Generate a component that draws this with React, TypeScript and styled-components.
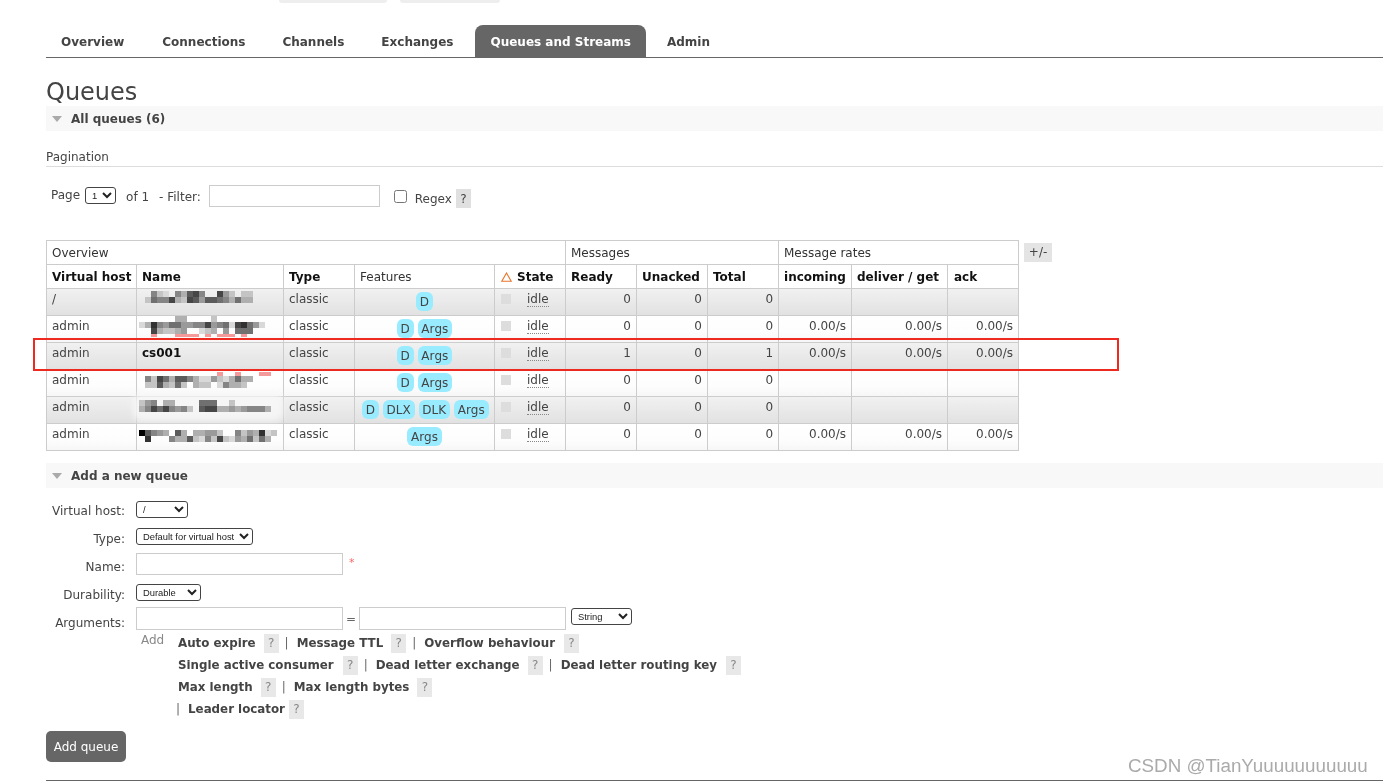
import React from 'react';
import styled, { createGlobalStyle } from 'styled-components';

const GlobalStyle = createGlobalStyle`
  html, body {
    margin: 0;
    padding: 0;
    background: #fff;
    overflow: hidden;
  }
  body {
    font-family: "DejaVu Sans", Verdana, sans-serif;
    font-size: 12px;
    color: #444;
  }
`;

const Page = styled.div`
  position: relative;
  width: 1383px;
  height: 783px;
  overflow: hidden;
  box-sizing: border-box;
  padding-left: 46px;
  transform: translateZ(0);
`;

const TopStubs = styled.div`
  display: flex;
  gap: 13px;
  height: 3px;
  margin-left: 233px;
`;

const TopStub = styled.div<{ $w: number }>`
  width: ${p => p.$w}px;
  background: #eee;
  border-radius: 0 0 4px 4px;
`;

const Tabs = styled.ul`
  display: flex;
  list-style: none;
  margin: 22px 0 0;
  padding: 0;
  height: 32px;
  border-bottom: 1px solid #666;
`;

const Tab = styled.li<{ $active?: boolean; $mr?: number }>`
  display: flex;
  align-items: center;
  padding: 2px 15px 0;
  margin-right: ${p => p.$mr ?? 7}px;
  font-weight: bold;
  font-size: 12px;
  border-radius: 8px 8px 0 0;
  color: ${p => (p.$active ? '#fff' : '#444')};
  background: ${p => (p.$active ? '#666' : 'transparent')};
`;

const Title = styled.h1`
  margin: 20px 0 0;
  height: 28px;
  font-size: 24px;
  line-height: 28px;
  font-weight: normal;
  color: #444;
`;

const SectionBar = styled.div<{ $mt?: number }>`
  display: flex;
  align-items: center;
  height: 25px;
  margin-top: ${p => p.$mt ?? 0}px;
  padding-left: 6px;
  background: #f8f8f8;
  font-weight: bold;
  font-size: 12px;
  color: #444;
`;

const Caret = styled.span`
  width: 0;
  height: 0;
  margin-right: 9px;
  border-left: 5px solid transparent;
  border-right: 5px solid transparent;
  border-top: 6px solid #aaa;
`;

const PaginationLabel = styled.div`
  margin-top: 19px;
  height: 16px;
  line-height: 14px;
  font-size: 12px;
  color: #444;
  border-bottom: 1px solid #ddd;
`;

const PagerRow = styled.div`
  display: flex;
  align-items: flex-start;
  height: 55px;
  margin-top: 18px;
  padding-left: 5px;
  font-size: 12px;
`;

const PagerText = styled.span<{ $ml?: number; $mt?: number }>`
  margin-left: ${p => p.$ml ?? 0}px;
  margin-top: ${p => p.$mt ?? 0}px;
  line-height: 16px;
  white-space: nowrap;
`;

const Select = styled.select<{ $w: number; $ml?: number; $mt?: number }>`
  width: ${p => p.$w}px;
  height: 17px;
  margin: ${p => p.$mt ?? 0}px 0 0 ${p => p.$ml ?? 0}px;
  padding: 0 0 1px 2px;
  font-family: "Liberation Sans", Arial, sans-serif;
  font-size: 9.4px;
  background: #fff;
  color: #222;
  border: 1px solid #444;
  border-radius: 3px;
`;

const TextInput = styled.input<{ $w: number; $h: number; $ml?: number; $mt?: number }>`
  box-sizing: border-box;
  width: ${p => p.$w}px;
  height: ${p => p.$h}px;
  margin: ${p => p.$mt ?? 0}px 0 0 ${p => p.$ml ?? 0}px;
  padding: 0 3px;
  border: 1px solid #ccc;
  background: #fff;
`;

const Checkbox = styled.input`
  width: 13px;
  height: 13px;
  margin: 5px 0 0 14px;
`;

const Help = styled.span<{ $ml?: number; $mt?: number; $soft?: boolean }>`
  display: inline-flex;
  align-items: center;
  justify-content: center;
  flex: none;
  width: 15px;
  height: 19px;
  margin-left: ${p => p.$ml ?? 0}px;
  margin-top: ${p => p.$mt ?? 0}px;
  background: ${p => (p.$soft ? '#e8e8e8' : '#e0e0e0')};
  color: ${p => (p.$soft ? '#888' : '#444')};
  font-size: 12px;
`;

const TableArea = styled.div`
  display: flex;
  align-items: flex-start;
`;

const Table = styled.table`
  table-layout: fixed;
  width: 972px;
  border-collapse: collapse;
  font-size: 12px;
  color: #444;
  border: 1px solid #ccc;
`;

const GroupCell = styled.th`
  height: 23px;
  padding: 0 5px;
  border: 1px solid #ccc;
  font-weight: normal;
  text-align: left;
  color: #333;
`;

const HeadCell = styled.th<{ $plain?: boolean; $pl?: number }>`
  height: 23px;
  padding: 0 5px 0 ${p => p.$pl ?? 5}px;
  border: 1px solid #ccc;
  text-align: left;
  white-space: nowrap;
  font-weight: ${p => (p.$plain ? 'normal' : 'bold')};
  color: ${p => (p.$plain ? '#333' : '#111')};
`;

const WarnIcon = styled.svg`
  display: inline-block;
  width: 11px;
  height: 10px;
  margin-right: 5px;
  vertical-align: -1px;
`;

const Row = styled.tr<{ $odd: boolean }>`
  background: ${p =>
    p.$odd
      ? 'linear-gradient(to bottom, #f1f1f1 0%, #e9e9e9 50%, #e1e1e1 100%)'
      : 'linear-gradient(to bottom, #ffffff 0%, #fdfdfd 60%, #f6f6f6 100%)'};
`;

const Cell = styled.td<{ $right?: boolean; $center?: boolean }>`
  position: relative;
  box-sizing: border-box;
  height: 27px;
  padding: 3px 5px 0;
  border: 1px solid #ccc;
  vertical-align: top;
  line-height: 15px;
  white-space: nowrap;
  text-align: ${p => (p.$right ? 'right' : p.$center ? 'center' : 'left')};
`;

const QueueName = styled.b`
  color: #111;
`;

const Pill = styled.abbr`
  display: inline-block;
  height: 19px;
  margin: 0 2px;
  padding: 0 3.7px;
  line-height: 20px;
  letter-spacing: 0.1px;
  background: #99ebff;
  border-radius: 6px;
  color: #444;
  text-decoration: none;
`;

const StateCell = styled.div`
  display: flex;
  align-items: flex-start;
`;

const StateDot = styled.span`
  flex: none;
  width: 10px;
  height: 10px;
  margin: 2px 16px 0 1px;
  background: #ddd;
`;

const StateText = styled.span`
  border-bottom: 1px dotted #888;
  line-height: 14px;
`;

const ToggleColumns = styled.div`
  margin: 3px 0 0 5px;
  width: 28px;
  height: 19px;
  background: #e4e4e4;
  color: #444;
  text-align: center;
  line-height: 19px;
  font-size: 12px;
`;

const MosaicSvg = styled.svg`
  position: absolute;
  left: 0;
  top: 0;
  overflow: visible;
`;

const HighlightBox = styled.div`
  position: absolute;
  left: 33px;
  top: 338px;
  width: 1082px;
  height: 29px;
  border: 2px solid #ee2a20;
  pointer-events: none;
`;

const QueueForm = styled.div`
  margin-top: 8px;
`;

const FormRow = styled.div`
  display: flex;
  align-items: flex-start;
  height: 28px;
`;

const FormLabel = styled.label`
  flex: none;
  width: 79px;
  margin-right: 11px;
  padding-top: 1px;
  text-align: right;
  line-height: 28px;
`;

const Star = styled.span`
  margin: 4px 0 0 6px;
  color: #f66;
  font-size: 11px;
`;

const EqualSign = styled.span`
  width: 16px;
  text-align: center;
  line-height: 22px;
  color: #666;
`;

const AddBlock = styled.div`
  display: flex;
  align-items: flex-start;
  margin: -4px 0 0 95px;
`;

const AddLabel = styled.span`
  width: 37px;
  flex: none;
  margin-top: 1px;
  color: #888;
  line-height: 14px;
`;

const LinkList = styled.div`
  display: flex;
  flex-direction: column;
`;

const LinkRow = styled.div`
  display: flex;
  align-items: center;
  height: 22px;
`;

const ArgLink = styled.b<{ $first?: boolean }>`
  margin-left: ${p => (p.$first ? 0 : 8)}px;
  font-size: 11.85px;
  white-space: nowrap;
  color: #444;
`;

const Divider = styled.span<{ $ml?: number }>`
  margin-left: ${p => p.$ml ?? 6}px;
  color: #666;
`;

const SubmitButton = styled.button`
  display: block;
  width: 80px;
  height: 31px;
  margin-top: 11px;
  padding: 0;
  border: none;
  border-radius: 5px;
  background: #666;
  color: #fff;
  font-family: inherit;
  font-size: 12px;
`;

const FooterRule = styled.div`
  height: 1px;
  margin-top: 18px;
  background: #666;
`;

const Watermark = styled.div`
  position: absolute;
  left: 1128px;
  top: 755px;
  font-family: "Liberation Sans", Arial, sans-serif;
  font-size: 18.8px;
  line-height: 22px;
  color: #aaa;
  white-space: nowrap;
`;

const VeilRect = styled.rect`
  filter: blur(3px);
`;

type Band = { y: number; cells: string; h?: number };

// pixelated queue names, one hex digit per 6px tile (0 = clear, p = pink)
const shade = (c: string) => {
  if (c === 'p') return '#f59a9a';
  const v = parseInt(c, 16);
  const g = Math.round(238 - v * 21);
  return `rgb(${g},${g},${g})`;
};

function Mosaic({ bands, veil }: { bands: Band[]; veil?: boolean }) {
  return (
    <MosaicSvg width="150" height="27">
      {veil && <VeilRect x="-4" y="-3" width="150" height="27" rx="8" fill="#f8f8f8" opacity="0.85" />}
      {bands.map(b =>
        b.cells.split('').map((c, i) =>
          c === '0' ? null : (
            <rect key={`${b.y}-${i}`} x={2 + i * 6} y={b.y} width="6" height={b.h ?? 6} fill={shade(c)} />
          ),
        ),
      )}
    </MosaicSvg>
  );
}

const rows = [
  {
    vhost: '/',
    features: ['D'],
    ready: 0,
    total: 0,
    rates: false,
    bands: [
      { y: 2, cells: '0052105378500842022' },
      { y: 8, cells: '0265583287477653633' },
    ],
  },
  {
    vhost: 'admin',
    features: ['D', 'Args'],
    ready: 0,
    total: 0,
    rates: true,
    bands: [
      { y: 0, cells: '000000330000200000' },
      { y: 6, cells: '139546644558456189641' },
      { y: 12, cells: '0083223400123040666' },
      { y: 18, cells: '00p000pppp0p0ppp0p0', h: 3 },
    ],
  },
  { vhost: 'admin', name: 'cs001', features: ['D', 'Args'], ready: 1, total: 1, rates: true },
  {
    vhost: 'admin',
    features: ['D', 'Args'],
    ready: 0,
    total: 0,
    rates: false,
    bands: [
      { y: 2, cells: '0000000000000p00p000pp', h: 4 },
      { y: 6, cells: '0528637753114213633' },
      { y: 12, cells: '0227326203220153320' },
    ],
  },
  {
    vhost: 'admin',
    features: ['D', 'DLX', 'DLK', 'Args'],
    ready: 0,
    total: 0,
    rates: false,
    veil: true,
    bands: [
      { y: 3, cells: '2450330000666002000000' },
      { y: 9, cells: '3586854520788334345553' },
    ],
  },
  {
    vhost: 'admin',
    features: ['Args'],
    ready: 0,
    total: 0,
    rates: true,
    bands: [
      { y: 6, cells: 'f7543073033442005243912' },
      { y: 12, cells: '0900053372152821436263' },
    ],
  },
];

const colWidths = [90, 147, 71, 140, 71, 71, 71, 71, 73, 96, 71];

const argLinks = [
  [
    { label: 'Auto expire', gap: 8 },
    { label: 'Message TTL', gap: 8 },
    { label: 'Overflow behaviour', gap: 9 },
  ],
  [
    { label: 'Single active consumer', gap: 9 },
    { label: 'Dead letter exchange', gap: 8 },
    { label: 'Dead letter routing key', gap: 9 },
  ],
  [
    { label: 'Max length', gap: 8 },
    { label: 'Max length bytes', gap: 8 },
  ],
];

export default function App() {
  return (
    <Page>
      <GlobalStyle />
      <TopStubs>
        <TopStub $w={108} />
        <TopStub $w={100} />
      </TopStubs>
      <Tabs>
        <Tab $mr={8}>Overview</Tab>
        <Tab>Connections</Tab>
        <Tab>Channels</Tab>
        <Tab>Exchanges</Tab>
        <Tab $active $mr={6}>Queues and Streams</Tab>
        <Tab>Admin</Tab>
      </Tabs>
      <Title>Queues</Title>
      <SectionBar>
        <Caret />
        All queues (6)
      </SectionBar>
      <PaginationLabel>Pagination</PaginationLabel>
      <PagerRow>
        <PagerText $mt={2}>Page</PagerText>
        <Select $w={31} $ml={5} $mt={2}>
          <option>1</option>
        </Select>
        <PagerText $ml={10} $mt={4}>of 1</PagerText>
        <PagerText $ml={10} $mt={4}>- Filter:</PagerText>
        <TextInput $w={171} $h={22} $ml={8} />
        <Checkbox type="checkbox" />
        <PagerText $ml={8} $mt={6}>Regex</PagerText>
        <Help $ml={4} $mt={4}>?</Help>
      </PagerRow>

      <TableArea>
        <Table>
          <colgroup>
            {colWidths.map((w, i) => (
              <col key={i} width={w} />
            ))}
          </colgroup>
          <thead>
            <tr>
              <GroupCell colSpan={5}>Overview</GroupCell>
              <GroupCell colSpan={3}>Messages</GroupCell>
              <GroupCell colSpan={3}>Message rates</GroupCell>
            </tr>
            <tr>
              <HeadCell>Virtual host</HeadCell>
              <HeadCell>Name</HeadCell>
              <HeadCell>Type</HeadCell>
              <HeadCell $plain>Features</HeadCell>
              <HeadCell $pl={6}>
                <WarnIcon viewBox="0 0 11 10">
                  <path d="M5.5 1 L10.2 9.3 L0.8 9.3 Z" fill="none" stroke="#e8742a" strokeWidth="1.1" />
                </WarnIcon>
                State
              </HeadCell>
              <HeadCell>Ready</HeadCell>
              <HeadCell>Unacked</HeadCell>
              <HeadCell>Total</HeadCell>
              <HeadCell>incoming</HeadCell>
              <HeadCell>deliver / get</HeadCell>
              <HeadCell $pl={6}>ack</HeadCell>
            </tr>
          </thead>
          <tbody>
            {rows.map((r, i) => (
              <Row key={i} $odd={i % 2 === 0}>
                <Cell>{r.vhost}</Cell>
                <Cell>
                  {r.name ? <QueueName>{r.name}</QueueName> : <Mosaic bands={r.bands ?? []} veil={r.veil} />}
                </Cell>
                <Cell>classic</Cell>
                <Cell $center>
                  {r.features.map(f => (
                    <Pill key={f}>{f}</Pill>
                  ))}
                </Cell>
                <Cell>
                  <StateCell>
                    <StateDot />
                    <StateText>idle</StateText>
                  </StateCell>
                </Cell>
                <Cell $right>{r.ready}</Cell>
                <Cell $right>0</Cell>
                <Cell $right>{r.total}</Cell>
                <Cell $right>{r.rates && '0.00/s'}</Cell>
                <Cell $right>{r.rates && '0.00/s'}</Cell>
                <Cell $right>{r.rates && '0.00/s'}</Cell>
              </Row>
            ))}
          </tbody>
        </Table>
        <ToggleColumns>+/-</ToggleColumns>
      </TableArea>

      <SectionBar $mt={12}>
        <Caret />
        Add a new queue
      </SectionBar>
      <QueueForm>
        <FormRow>
          <FormLabel>Virtual host:</FormLabel>
          <Select $w={52} $mt={5}>
            <option>/</option>
          </Select>
        </FormRow>
        <FormRow>
          <FormLabel>Type:</FormLabel>
          <Select $w={117} $mt={4}>
            <option>Default for virtual host</option>
          </Select>
        </FormRow>
        <FormRow>
          <FormLabel>Name:</FormLabel>
          <TextInput $w={207} $h={22} $mt={1} />
          <Star>*</Star>
        </FormRow>
        <FormRow>
          <FormLabel>Durability:</FormLabel>
          <Select $w={65} $mt={4}>
            <option>Durable</option>
          </Select>
        </FormRow>
        <FormRow>
          <FormLabel>Arguments:</FormLabel>
          <TextInput $w={207} $h={23} $mt={-1} />
          <EqualSign>=</EqualSign>
          <TextInput $w={207} $h={23} $mt={-1} />
          <Select $w={61} $ml={5} $mt={0}>
            <option>String</option>
          </Select>
        </FormRow>
        <AddBlock>
          <AddLabel>Add</AddLabel>
          <LinkList>
            {argLinks.map((links, i) => (
              <LinkRow key={i}>
                {links.map((l, j) => (
                  <React.Fragment key={l.label}>
                    {j > 0 && <Divider>|</Divider>}
                    <ArgLink $first={j === 0}>{l.label}</ArgLink>
                    <Help $soft $ml={l.gap}>?</Help>
                  </React.Fragment>
                ))}
              </LinkRow>
            ))}
            <LinkRow>
              <Divider $ml={-2}>|</Divider>
              <ArgLink>Leader locator</ArgLink>
              <Help $soft $ml={4}>?</Help>
            </LinkRow>
          </LinkList>
        </AddBlock>
      </QueueForm>
      <SubmitButton>Add queue</SubmitButton>
      <FooterRule />
      <HighlightBox />
      <Watermark>CSDN @TianYuuuuuuuuuuu</Watermark>
    </Page>
  );
}
